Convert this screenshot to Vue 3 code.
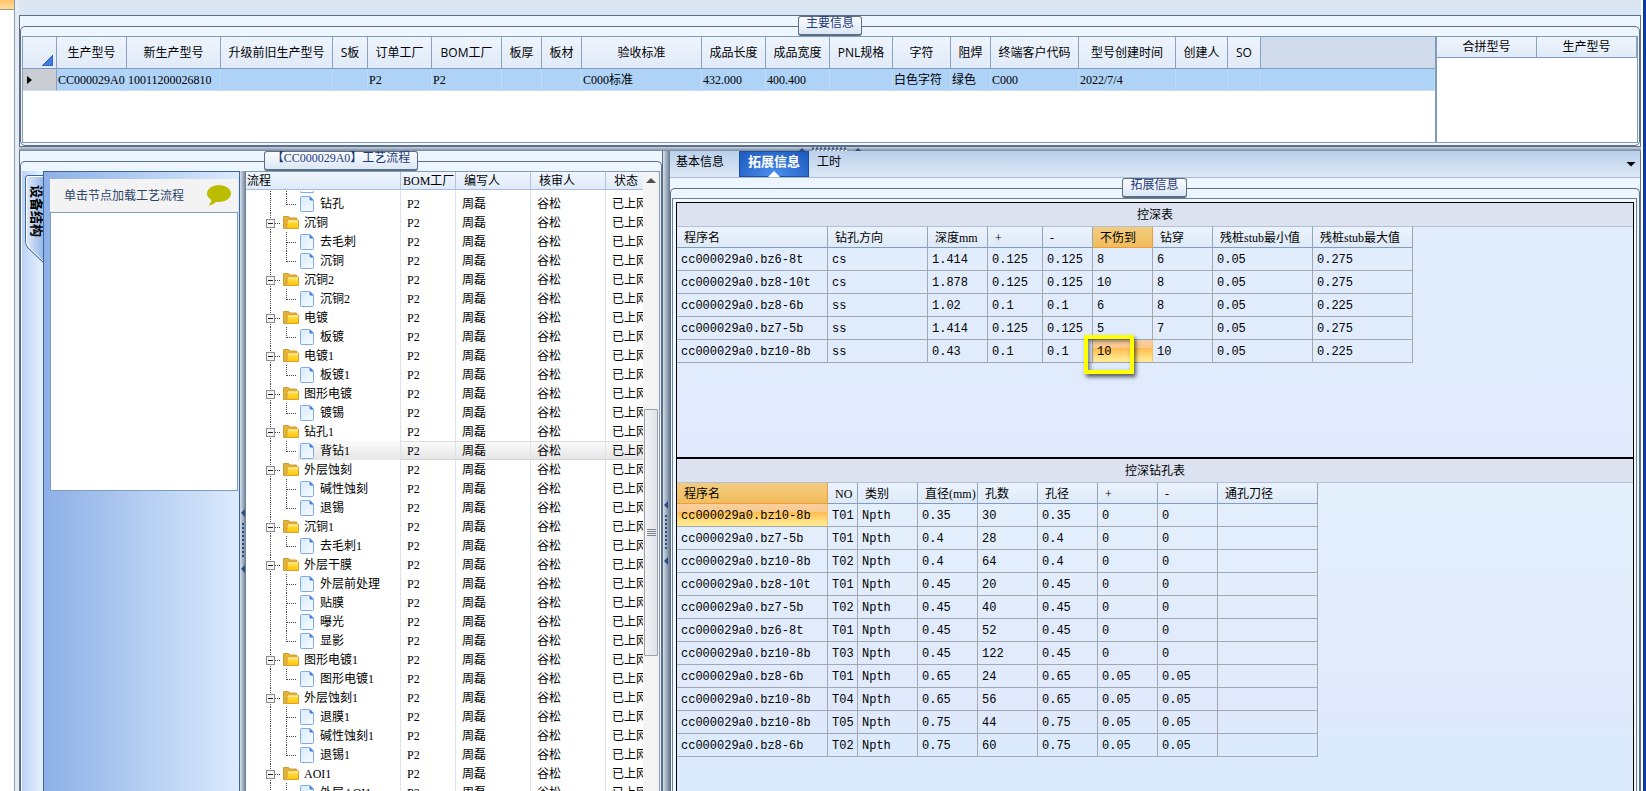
<template>
  <div class="window">
    <!-- 左侧收起的导航 -->
    <div class="nav-edge">
      <div class="nav-hot"></div>
    </div>

    <main class="main">
      <div class="top-band"></div>

      <!-- 主要信息 -->
      <section class="pane info-pane">
        <fieldset class="group">
          <legend class="group-title">主要信息</legend>
          <div class="info-grids">
            <div class="info-left">
              <table class="info-table">
                <colgroup>
                  <col class="w34" />
                  <col v-for="c in infoCols" :key="c.name" :style="{ width: c.width + 'px' }" />
                  <col />
                </colgroup>
                <thead>
                  <tr>
                    <th class="corner">
                      <svg class="corner-mark" width="11" height="11" viewBox="0 0 11 11">
                        <path d="M11 0V11H0Z" fill="#3f7be0" stroke="#2a5cb4" stroke-width="1" />
                      </svg>
                    </th>
                    <th v-for="c in infoCols" :key="c.name">{{ c.name }}</th>
                    <th class="filler"></th>
                  </tr>
                </thead>
                <tbody>
                  <tr>
                    <td class="row-mark">
                      <svg width="5" height="8" viewBox="0 0 5 8"><path d="M0 0L5 4L0 8Z" fill="#000" /></svg>
                    </td>
                    <td v-for="c in infoCols" :key="c.name">{{ c.value }}</td>
                    <td></td>
                  </tr>
                </tbody>
              </table>
            </div>
            <div class="info-right">
              <table class="merge-table">
                <thead>
                  <tr>
                    <th>合拼型号</th>
                    <th>生产型号</th>
                  </tr>
                </thead>
              </table>
            </div>
          </div>
        </fieldset>
      </section>

      <div class="split-h">
        <svg class="grip" width="64" height="5" viewBox="0 0 64 5">
          <path d="M0 5L4 1L8 5ZM56 5L60 1L64 5Z" fill="#2c4880" />
          <path d="M14 1.5H49" stroke="#2c4880" stroke-width="2" stroke-dasharray="2 2" />
          <path d="M15 3.5H50" stroke="#fff" stroke-width="1" stroke-dasharray="2 2" />
        </svg>
      </div>

      <div class="lower">
        <!-- 工艺流程 -->
        <section class="pane flow-pane">
          <fieldset class="group open">
            <legend class="group-title">【CC000029A0】工艺流程</legend>
            <div class="flow-body">
              <div class="side-tabs">
                <svg class="tab-shape" width="23" height="92" viewBox="0 0 23 92">
                  <defs>
                    <linearGradient id="tabFill" x1="0" x2="1" y1="0" y2="0">
                      <stop offset="0" stop-color="#e3eefd" />
                      <stop offset="1" stop-color="#8fb2e6" />
                    </linearGradient>
                  </defs>
                  <path d="M23 0V4H6Q3 4 3 7V70Q3 74 6 77L21 92H23Z" fill="url(#tabFill)" />
                  <path d="M23 4.5H6Q3.5 4.5 3.5 7V70Q3.5 74 6 77L21.500 91.500" fill="none" stroke="#3c66a0" />
                  <path d="M22 5.500H7Q4.500 5.500 4.500 8V70Q4.500 73 7 76L22 91" fill="none" stroke="#fff" />
                </svg>
                <button class="side-tab" type="button">设备结构</button>
              </div>
              <div class="side-panel">
                <div class="tip">
                  <span>单击节点加载工艺流程</span>
                  <svg width="24" height="21" viewBox="0 0 24 21">
                    <path
                      d="M12 0C18.600 0 24 3.800 24 8.600S18.600 17 12 17C11 17 10 16.900 9 16.700C7 18.800 4.500 20.200 1.500 20.500C3.200 18.800 4.200 17 4.300 15C1.600 13.400 0 11.200 0 8.600C0 3.800 5.400 0 12 0Z"
                      fill="#bcbc00"
                    />
                  </svg>
                </div>
                <div class="side-box"></div>
              </div>
              <div class="split-v">
                <svg class="grip-v" width="5" height="64" viewBox="0 0 5 64">
                  <path d="M5 0V8L1 4ZM5 56V64L1 60Z" fill="#2c4880" />
                  <path d="M3 14V50" stroke="#2c4880" stroke-width="2" stroke-dasharray="2 2" />
                </svg>
              </div>

              <div class="tree">
                <div class="tree-view">
                  <table class="tree-table">
                    <colgroup>
                      <col class="w155" />
                      <col class="w55" />
                      <col class="w75" />
                      <col class="w75" />
                      <col />
                    </colgroup>
                    <thead>
                      <tr>
                        <th>流程</th>
                        <th class="tight">BOM工厂</th>
                        <th>编写人</th>
                        <th>核审人</th>
                        <th>状态</th>
                      </tr>
                    </thead>
                    <tbody>
                      <!-- 滚动后只露出底边的一行 -->
                      <tr class="peek">
                        <td>
                          <svg width="70" height="3" viewBox="0 0 70 3">
                            <path d="M24.500 0V3M40.500 0V3" class="dots" />
                            <path d="M54.500 0V1.500H67.500V0" fill="none" stroke="#7fabe6" />
                          </svg>
                        </td>
                        <td></td>
                        <td></td>
                        <td></td>
                        <td></td>
                      </tr>
                      <tr v-for="(n, i) in nodes" :key="i" :class="{ picked: n.name === '背钻1' }">
                        <td>
                          <div class="node">
                            <svg v-if="n.folder" class="node-art" width="55" height="19" viewBox="0 0 55 19">
                              <defs>
                                <linearGradient id="folderFill" x1="0" x2="0" y1="0" y2="1">
                                  <stop offset="0" stop-color="#ffe45c" />
                                  <stop offset="1" stop-color="#ffc400" />
                                </linearGradient>
                              </defs>
                              <path d="M24.500 0V19" class="dots" />
                              <path d="M29 10.500H34" class="dots" />
                              <rect x="20.500" y="6.500" width="8" height="8" fill="#f4f4f4" stroke="#8c8c8c" />
                              <path d="M22 10.500H27" stroke="#222" />
                              <path d="M37.500 15.500V3.500H42.500L44 5H50.500V7.500H41.500L39.500 15.500Z" fill="#e3b43a" stroke="#cf9c34" />
                              <path d="M41 7H52.500V15.500H40L41 14Z" fill="url(#folderFill)" stroke="#d9a030" />
                              <path d="M42 8H52" stroke="#fff6c0" />
                            </svg>
                            <svg v-else class="node-art" width="71" height="19" viewBox="0 0 71 19">
                              <defs>
                                <linearGradient id="fileFill" x1="0" x2="1" y1="0" y2="1">
                                  <stop offset="0" stop-color="#d8eaff" />
                                  <stop offset="1" stop-color="#f8fcff" />
                                </linearGradient>
                              </defs>
                              <path d="M24.500 0V19" class="dots" />
                              <path :d="n.last ? 'M40.500 0V11' : 'M40.500 0V19'" class="dots" />
                              <path d="M41 10.500H50" class="dots" />
                              <path d="M55.500 2.500H64L67.500 6V16.500Q67.500 17.500 66.500 17.500H55.500Q54.500 17.500 54.500 16.500V3.500Q54.500 2.500 55.500 2.500Z" fill="url(#fileFill)" stroke="#7fabe6" />
                              <path d="M64 3L67 6H64Z" fill="#2b6fd6" stroke="#4d88de" />
                            </svg>
                            <span class="node-name">{{ n.name }}</span>
                          </div>
                        </td>
                        <td>P2</td>
                        <td>周磊</td>
                        <td>谷松</td>
                        <td>已上网</td>
                      </tr>
                    </tbody>
                  </table>
                </div>
                <div class="scrollbar">
                  <button class="scroll-up" type="button" aria-label="up"></button>
                  <div class="scroll-gap"></div>
                  <div class="scroll-thumb"><i></i><i></i><i></i><i></i></div>
                </div>
              </div>
            </div>
          </fieldset>
        </section>

        <div class="split-v wide">
          <svg class="grip-v" width="5" height="64" viewBox="0 0 5 64">
            <path d="M5 0V8L1 4ZM5 56V64L1 60Z" fill="#2c4880" />
            <path d="M3 14V50" stroke="#2c4880" stroke-width="2" stroke-dasharray="2 2" />
          </svg>
        </div>

        <!-- 拓展信息 -->
        <section class="ext-pane">
          <nav class="tabs">
            <button
              v-for="t in tabs"
              :key="t"
              type="button"
              class="tab"
              :class="{ active: t === activeTab }"
              @click="activeTab = t"
            >{{ t }}</button>
            <button class="tabs-more" type="button" aria-label="more"></button>
          </nav>
          <fieldset class="group open">
            <legend class="group-title">拓展信息</legend>
            <div class="frame">
              <div class="sheets">
                <section v-for="s in sheets" :key="s.title" class="sheet" :class="s.cls">
                  <h2 class="sheet-title">{{ s.title }}</h2>
                  <table class="sheet-table" :style="{ width: s.width + 'px' }">
                    <colgroup>
                      <col v-for="(w, i) in s.widths" :key="i" :style="{ width: w + 'px' }" />
                    </colgroup>
                    <thead>
                      <tr>
                        <th v-for="(h, i) in s.heads" :key="i" :class="{ hot: i === s.hotCol }">{{ h }}</th>
                      </tr>
                    </thead>
                    <tbody>
                      <tr v-for="(r, ri) in s.rows" :key="ri">
                        <td v-for="(v, i) in r" :key="i" :class="{ hot: ri === s.hotRow && i === s.hotCol }">
                          {{ v }}
                          <span v-if="s.marked && ri === s.hotRow && i === s.hotCol" class="marker"></span>
                        </td>
                      </tr>
                    </tbody>
                  </table>
                </section>
              </div>
            </div>
          </fieldset>
        </section>
      </div>
    </main>

    <div class="right-edge"></div>
  </div>
</template>

<script setup>
import { ref } from 'vue'

const infoCols = [
  { name: '生产型号', width: 70, value: 'CC000029A0' },
  { name: '新生产型号', width: 94, value: '10011200026810' },
  { name: '升级前旧生产型号', width: 112, value: '' },
  { name: 'S板', width: 35, value: '' },
  { name: '订单工厂', width: 64, value: 'P2' },
  { name: 'BOM工厂', width: 70, value: 'P2' },
  { name: '板厚', width: 40, value: '' },
  { name: '板材', width: 40, value: '' },
  { name: '验收标准', width: 120, value: 'C000标准' },
  { name: '成品长度', width: 64, value: '432.000' },
  { name: '成品宽度', width: 64, value: '400.400' },
  { name: 'PNL规格', width: 63, value: '' },
  { name: '字符', width: 58, value: '白色字符' },
  { name: '阻焊', width: 40, value: '绿色' },
  { name: '终端客户代码', width: 88, value: 'C000' },
  { name: '型号创建时间', width: 97, value: '2022/7/4' },
  { name: '创建人', width: 52, value: '' },
  { name: 'SO', width: 33, value: '' },
]

const flow = [
  ['', ['钻孔']],
  ['沉铜', ['去毛刺', '沉铜']],
  ['沉铜2', ['沉铜2']],
  ['电镀', ['板镀']],
  ['电镀1', ['板镀1']],
  ['图形电镀', ['镀锡']],
  ['钻孔1', ['背钻1']],
  ['外层蚀刻', ['碱性蚀刻', '退锡']],
  ['沉铜1', ['去毛刺1']],
  ['外层干膜', ['外层前处理', '贴膜', '曝光', '显影']],
  ['图形电镀1', ['图形电镀1']],
  ['外层蚀刻1', ['退膜1', '碱性蚀刻1', '退锡1']],
  ['AOI1', ['外层AOI1']],
]

// 展平成行
const nodes = flow.flatMap(([name, kids]) => [
  ...(name ? [{ name, folder: true }] : []),
  ...kids.map((k, i) => ({ name: k, folder: false, last: i === kids.length - 1 })),
])

const tabs = ['基本信息', '拓展信息', '工时']
const activeTab = ref('拓展信息')

const sheets = [
  {
    title: '控深表',
    cls: 'upper',
    width: 736,
    widths: [151, 100, 60, 55, 50, 60, 60, 100, 100],
    heads: ['程序名', '钻孔方向', '深度mm', '+', '-', '不伤到', '钻穿', '残桩stub最小值', '残桩stub最大值'],
    hotCol: 5,
    hotRow: 4,
    marked: true,
    rows: [
      ['cc000029a0.bz6-8t', 'cs', '1.414', '0.125', '0.125', '8', '6', '0.05', '0.275'],
      ['cc000029a0.bz8-10t', 'cs', '1.878', '0.125', '0.125', '10', '8', '0.05', '0.275'],
      ['cc000029a0.bz8-6b', 'ss', '1.02', '0.1', '0.1', '6', '8', '0.05', '0.225'],
      ['cc000029a0.bz7-5b', 'ss', '1.414', '0.125', '0.125', '5', '7', '0.05', '0.275'],
      ['cc000029a0.bz10-8b', 'ss', '0.43', '0.1', '0.1', '10', '10', '0.05', '0.225'],
    ],
  },
  {
    title: '控深钻孔表',
    cls: 'bottom',
    width: 641,
    widths: [151, 30, 60, 60, 60, 60, 60, 60, 100],
    heads: ['程序名', 'NO', '类别', '直径(mm)', '孔数', '孔径', '+', '-', '通孔刀径'],
    hotCol: 0,
    hotRow: 0,
    marked: false,
    rows: [
      ['cc000029a0.bz10-8b', 'T01', 'Npth', '0.35', '30', '0.35', '0', '0', ''],
      ['cc000029a0.bz7-5b', 'T01', 'Npth', '0.4', '28', '0.4', '0', '0', ''],
      ['cc000029a0.bz10-8b', 'T02', 'Npth', '0.4', '64', '0.4', '0', '0', ''],
      ['cc000029a0.bz8-10t', 'T01', 'Npth', '0.45', '20', '0.45', '0', '0', ''],
      ['cc000029a0.bz7-5b', 'T02', 'Npth', '0.45', '40', '0.45', '0', '0', ''],
      ['cc000029a0.bz6-8t', 'T01', 'Npth', '0.45', '52', '0.45', '0', '0', ''],
      ['cc000029a0.bz10-8b', 'T03', 'Npth', '0.45', '122', '0.45', '0', '0', ''],
      ['cc000029a0.bz8-6b', 'T01', 'Npth', '0.65', '24', '0.65', '0.05', '0.05', ''],
      ['cc000029a0.bz10-8b', 'T04', 'Npth', '0.65', '56', '0.65', '0.05', '0.05', ''],
      ['cc000029a0.bz10-8b', 'T05', 'Npth', '0.75', '44', '0.75', '0.05', '0.05', ''],
      ['cc000029a0.bz8-6b', 'T02', 'Npth', '0.75', '60', '0.75', '0.05', '0.05', ''],
    ],
  },
]
</script>

<style>
body {
  overflow: hidden;
}
</style>

<style scoped>
* {
  box-sizing: border-box;
}

.window {
  display: flex;
  height: 100vh;
  overflow: hidden;
  background: #dbe6f2;
  font-family: 'Liberation Serif', 'Noto Sans CJK SC', serif;
  font-size: 12px;
  line-height: 16px;
  color: #000;
}

button {
  padding: 0;
  border: 0;
  background: none;
  font: inherit;
  color: inherit;
}

table {
  border-spacing: 0;
  table-layout: fixed;
}

th,
td {
  padding: 0;
  font-weight: 400;
  white-space: nowrap;
  overflow: hidden;
}

/* 左边缘 */
.nav-edge {
  flex: none;
  width: 19px;
  background: linear-gradient(90deg, #fff 14px, #8b9cb6 14px, #8b9cb6 15px, #e6ecf5 15px);
}

.nav-hot {
  width: 14px;
  height: 10px;
  background: linear-gradient(180deg, #ffc56c, #ffdc9c);
  border-bottom: 1px solid #9a9a8c;
}

.right-edge {
  flex: none;
  width: 5px;
  background: linear-gradient(90deg, #fff 2px, #0a3aa4 2px);
}

.main {
  flex: 1;
  min-width: 0;
  display: flex;
  flex-direction: column;
}

.top-band {
  height: 15px;
  background: linear-gradient(180deg, #dde6f1, #d8e5f3);
}

/* 分组框 */
.pane {
  border: 1px solid #5c6f85;
  background: #edf5fe;
}

.group {
  min-width: 0;
  margin: 0;
  padding: 0 1px 2px;
  border: 1px solid #5c6f85;
  border-radius: 5px;
}

.group.open {
  flex: 1;
  min-height: 0;
  padding-bottom: 0;
  border-bottom: 0;
  border-radius: 5px 5px 0 0;
}

.group-title {
  height: 20px;
  margin: 0 auto;
  padding: 0 7px;
  border: 1px solid #5c6f85;
  border-bottom-width: 2px;
  border-radius: 3px;
  background: linear-gradient(180deg, #fafcff, #dbe7f4);
  line-height: 13px;
  color: #1f3a7a;
}

/* 主要信息 */
.info-pane {
  border-bottom: 0;
}

.info-grids {
  display: flex;
  height: 107px;
  border: 1px solid #7f9db9;
}

.info-left {
  flex: 1;
  min-width: 0;
  overflow: hidden;
  background: #fff;
}

.info-right {
  flex: none;
  width: 202px;
  border-left: 2px solid #7f9db9;
  background: #fff;
}

.info-table,
.merge-table {
  width: 100%;
}

.info-table th,
.merge-table th {
  height: 32px;
  border-right: 1px solid #8aa2c2;
  border-bottom: 1px solid #7f9bc0;
  background: linear-gradient(180deg, #eef4fc, #e0eaf8);
  font-family: 'Open Sans', 'Noto Sans CJK SC', sans-serif;
  text-align: center;
}

.merge-table th {
  height: 21px;
}

.info-table .filler {
  border-right: 0;
  background: #d0dbec;
}

.info-table .corner {
  padding: 0 3px 2px 0;
  vertical-align: bottom;
  text-align: right;
}

.corner-mark {
  display: block;
  margin-left: auto;
}

.info-table td {
  height: 22px;
  padding-left: 1px;
  border-right: 1px solid #c0dbf7;
  border-bottom: 1px solid #c9def5;
  background: #afd3f7;
}

.info-table .row-mark {
  padding-left: 4px;
  border-right-color: #8aa2c2;
  background: #c9cdd2;
}

.w34 { width: 34px; }
.w55 { width: 55px; }
.w75 { width: 75px; }
.w155 { width: 155px; }

/* 分隔条 */
.split-h {
  flex: none;
  display: flex;
  justify-content: center;
  height: 5px;
  border-top: 1px solid #5c6f85;
  background: linear-gradient(180deg, #c9d4e2, #75869c);
}

.split-v {
  flex: none;
  width: 6px;
  padding-top: 338px;
  background: linear-gradient(90deg, #d6e0ec, #66798f);
}

.split-v.wide {
  width: 7px;
  padding-top: 350px;
}

.grip-v {
  display: block;
}

.lower {
  flex: 1;
  min-height: 0;
  display: flex;
}

/* 工艺流程 */
.flow-pane {
  flex: 0 1 644px;
  min-width: 0;
  display: flex;
  border-top: 0;
  border-bottom: 0;
}

.flow-body {
  display: flex;
  height: 100%;
}

.side-tabs {
  flex: none;
  display: grid;
  align-content: start;
  width: 21px;
  background: linear-gradient(90deg, #bcd3f7, #e8f2fe);
}

.tab-shape,
.side-tab {
  grid-area: 1 / 1;
}

.side-tab {
  justify-self: end;
  align-self: start;
  padding: 14px 1px 0 0;
  writing-mode: vertical-rl;
  text-orientation: sideways;
  font-weight: 700;
  font-size: 13px;
  line-height: 16px;
}

.side-panel {
  flex: none;
  width: 197px;
  padding: 7px 1px 0 6px;
  border: 1px solid #3c66a0;
  border-bottom: 0;
  background: linear-gradient(90deg, #8db0e6, #dbeafd);
}

.tip {
  display: flex;
  align-items: center;
  justify-content: space-between;
  height: 33px;
  padding: 0 7px 0 14px;
  background: #f3f3f4;
  color: #2b4368;
}

.side-box {
  height: 279px;
  border: 1px solid #7f9db9;
  background: #fff;
}

.tree {
  flex: 1;
  min-width: 0;
  display: flex;
  border-top: 1px solid #7f9db9;
  border-right: 1px solid #7f9db9;
  background: #fff;
}

.tree-view {
  flex: 1;
  min-width: 0;
  overflow: hidden;
}

.tree-table {
  width: 100%;
}

.tree-table th {
  height: 18px;
  padding-left: 8px;
  border-right: 1px solid #b3c3d8;
  border-bottom: 1px solid #a5bcda;
  background: linear-gradient(180deg, #f0f6fe, #dfeaf8);
  text-align: left;
  line-height: 16px;
}

.tree-table th:first-child {
  padding-left: 1px;
}

.tree-table .tight {
  padding-left: 2px;
}

.tree-table td {
  height: 19px;
  padding-left: 6px;
  border-right: 1px solid #dde3ea;
}

.tree-table td:first-child {
  padding-left: 0;
}

.tree-table th:last-child,
.tree-table td:last-child {
  border-right: 0;
}

.tree-table .peek td {
  height: 3px;
  line-height: 0;
}

.node {
  display: flex;
  align-items: center;
  height: 19px;
}

.node-art {
  flex: none;
}

.node-name {
  padding: 0 3px;
}

.dots {
  fill: none;
  stroke: #444;
  stroke-dasharray: 1 1;
}

.picked td {
  border-top: 1px solid #dcdcdc;
  border-bottom: 1px solid #d4d4d4;
  background: linear-gradient(180deg, #fafafa, #e6e6e6);
}

.picked td:first-child {
  border-top: 0;
  border-bottom: 0;
  background: linear-gradient(90deg, #fff 52px, transparent 52px), linear-gradient(180deg, #fafafa, #e6e6e6);
}

.scrollbar {
  flex: none;
  display: flex;
  flex-direction: column;
  align-items: center;
  width: 16px;
  background: #f4f4f5;
}

.scroll-up {
  width: 10px;
  height: 5px;
  margin-top: 6px;
  background: #505050;
  clip-path: polygon(50% 0, 100% 100%, 0 100%);
}

.scroll-gap {
  height: 226px;
}

.scroll-thumb {
  display: flex;
  flex-direction: column;
  align-items: center;
  justify-content: center;
  gap: 1px;
  width: 14px;
  height: 247px;
  border: 1px solid #9a9fa8;
  border-radius: 1px;
  background: linear-gradient(90deg, #f3f4f7, #dfe2e8);
}

.scroll-thumb i {
  width: 9px;
  height: 1px;
  background: #7c828c;
}

/* 拓展信息 */
.ext-pane {
  flex: 1;
  min-width: 0;
  display: flex;
  flex-direction: column;
  border-right: 1px solid #5c6f85;
  background: #edf5fe;
}

.ext-pane .group {
  padding-right: 2px;
}

.tabs {
  flex: none;
  display: flex;
  height: 27px;
  border-bottom: 1px solid #a9bbd2;
  background: linear-gradient(180deg, #bbd0ec, #dde8f5);
}

.tab {
  padding: 0 8px 4px;
}

.tab:first-child {
  padding: 0 15px 4px 6px;
}

.tab.active {
  display: flex;
  flex-direction: column;
  align-items: center;
  padding: 0 8px;
  border: 1px solid #1a4fa0;
  background: radial-gradient(ellipse at bottom, #4c90ee, #1c59be);
  font-size: 13px;
  font-weight: 700;
  line-height: 19px;
  color: #fff;
}

.tab.active::after {
  content: '';
  flex: none;
  width: 12px;
  height: 6px;
  margin-top: auto;
  background: #fff;
  clip-path: polygon(50% 0, 100% 100%, 0 100%);
}

.tabs-more {
  align-self: center;
  width: 10px;
  height: 5px;
  margin: 0 4px 0 auto;
  background: #000;
  clip-path: polygon(0 0, 100% 0, 50% 100%);
}

.frame {
  height: 100%;
  padding: 3px 2px 0 3px;
  border: 1px solid #6d7f92;
  border-bottom: 0;
  background: #f0f8fd;
}

.sheets {
  display: flex;
  flex-direction: column;
  height: 100%;
  border: 1px solid #000;
  border-bottom: 0;
}

.sheet {
  overflow: hidden;
}

.sheet.upper {
  flex: none;
  height: 255px;
  border-bottom: 1px solid #000;
  background: linear-gradient(180deg, #e1edfd, #e0eafc);
}

.sheet.bottom {
  flex: 1;
  border-top: 1px solid #000;
  background: linear-gradient(180deg, #e4effc 10%, #dfe9fb 78%, #dbebfd 84%);
}

.sheet-title {
  height: 24px;
  margin: 0;
  border-bottom: 1px solid #b0c1d6;
  background: #dce2ef;
  font-size: 12px;
  font-weight: 400;
  line-height: 24px;
  text-align: center;
}

.sheet-table th {
  height: 21px;
  padding: 2px 0 0 7px;
  border-right: 1px solid #8fa5c0;
  border-bottom: 1px solid #7f9dc0;
  background: linear-gradient(180deg, #ebf3fd, #dfe9f7);
  text-align: left;
}

.sheet-table td {
  height: 23px;
  padding: 2px 0 0 4px;
  border-right: 1px solid #a3a8b0;
  border-bottom: 1px solid #a3a8b0;
  font-family: 'Liberation Mono', 'Noto Sans CJK SC', monospace;
}

.sheet-table th.hot {
  border-color: #ee9a3e;
  background: linear-gradient(180deg, #f3cc80, #f2bd5c);
}

.sheet-table td.hot {
  position: relative;
  overflow: visible;
  border-right-color: #f5c06a;
  background: linear-gradient(180deg, #f8cfa0, #fbc98c 35%, #ffbc50 38%, #ffe990 90%);
}

/* 标注框 */
.marker {
  position: absolute;
  left: -9px;
  top: -5px;
  width: 50px;
  height: 39px;
  border: 4px solid #ffff00;
  box-shadow: 2px 3px 4px rgba(0, 0, 0, 0.6), inset 2px 2px 4px rgba(0, 0, 0, 0.5);
}
</style>
